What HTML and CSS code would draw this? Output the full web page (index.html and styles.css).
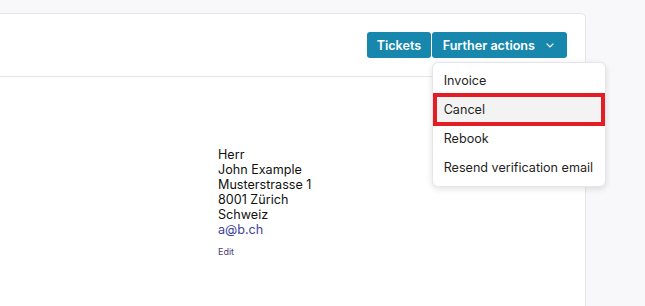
FILE: index.html
```html
<!DOCTYPE html>
<html lang="en">
<head>
    <meta charset="UTF-8">
    <meta name="viewport" content="width=device-width, initial-scale=1.0">
    <title>Booking</title>
    <link rel="stylesheet" href="styles.css">
</head>
<body>

<div class="page">
    <div class="card">
        <!-- Header with actions -->
        <div class="card-header">
            <div class="actions">
                <button class="btn">Tickets</button>
                <div class="dropdown">
                    <button class="btn btn-toggle">
                        Further actions
                        <svg class="caret" width="8" height="5" viewBox="0 0 8 5"><path d="M0.6 0.6l3.4 3.4 3.4-3.4" fill="none" stroke="currentColor" stroke-width="1.2"/></svg>
                    </button>
                    <ul class="menu">
                        <li>Invoice</li>
                        <li class="selected">Cancel</li>
                        <li>Rebook</li>
                        <li>Resend verification email</li>
                    </ul>
                </div>
            </div>
        </div>

        <!-- Customer address -->
        <div class="card-body">
            <div class="address">
                <div>Herr</div>
                <div>John Example</div>
                <div>Musterstrasse 1</div>
                <div>8001 Zürich</div>
                <div>Schweiz</div>
                <a href="#">a@b.ch</a>
                <a class="edit" href="#">Edit</a>
            </div>
        </div>
    </div>
</div>

</body>
</html>
```

FILE: styles.css
```css
body {
    font-family: Inter, "Noto Sans", sans-serif;
    background-color: #f8f8fa;
    margin: 0;
    overflow: hidden;
}

.page {
    padding: 13px 59px 0 0;
}

.card {
    margin-left: -20px;
    background-color: white;
    border: 1px solid #e6e6ea;
    border-radius: 0 5px 0 0;
    min-height: 320px;
}

.card-header {
    display: flex;
    justify-content: flex-end;
    padding: 18px 18px 18px;
    border-bottom: 1px solid #e6e6ea;
}

.actions {
    display: flex;
    gap: 1px;
}

.btn {
    display: flex;
    align-items: center;
    height: 26px;
    padding: 0 9.5px;
    background-color: #1787ad;
    color: white;
    border: none;
    border-radius: 3px;
    font-family: Inter, sans-serif;
    font-size: 12.6px;
    font-weight: 600;
}

.btn-toggle {
    gap: 11px;
    padding: 0 13px 0 11px;
}

.dropdown {
    position: relative;
}

.menu {
    position: absolute;
    top: 30px;
    left: 0;
    width: 172px;
    margin: 0;
    padding: 3px 0 4px;
    list-style: none;
    background-color: white;
    border: 1px solid #e6e6ea;
    border-radius: 6px;
    box-shadow: 0 2px 6px rgba(0, 0, 0, 0.12);
    z-index: 2;
}

.menu li {
    height: 29px;
    line-height: 29px;
    padding: 0 11px;
    font-size: 12.6px;
    color: #1f1f1f;
    white-space: nowrap;
}

.menu li.selected {
    box-sizing: border-box;
    height: 33px;
    line-height: 25px;
    margin: -2px 0;
    padding: 0 7px;
    border: 4px solid #e41d24;
    background-color: #f3f3f3;
}

.card-body {
    padding: 70px 0 0 237px;
}

.address {
    display: flex;
    flex-direction: column;
    font-size: 12.6px;
    line-height: 15px;
    color: #111;
}

.address a {
    color: #3c3f9c;
    text-decoration: none;
}

.address .edit {
    margin-top: 7px;
    font-size: 9px;
    color: #4a3d78;
}
```
